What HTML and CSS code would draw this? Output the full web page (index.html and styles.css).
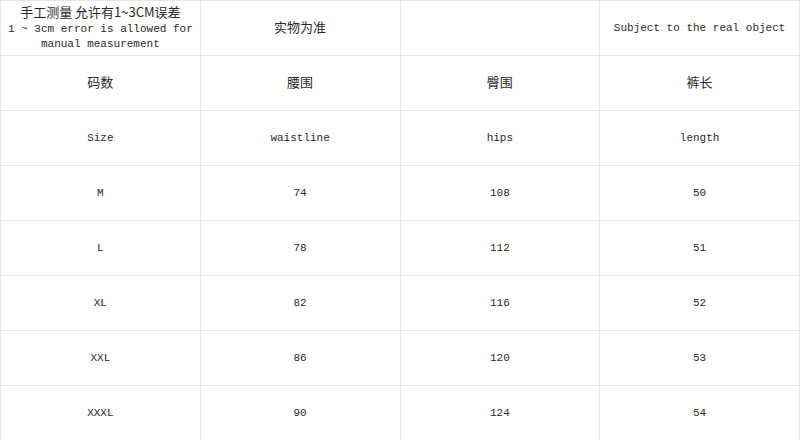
FILE: index.html
```html
<!DOCTYPE html>
<html>
<head>
<meta charset="utf-8">
<link rel="stylesheet" href="styles.css">
</head>
<body>
<table class="size-table">
  <colgroup><col class="c"><col class="c"><col class="c"><col class="c"></colgroup>
  <tr class="head">
    <td><span class="cjk">手工测量 允许有1~3CM误差</span><br>1 ~ 3cm error is allowed for<br>manual measurement</td>
    <td><span class="cjk">实物为准</span></td>
    <td></td>
    <td>Subject to the real object</td>
  </tr>
  <tr><td><span class="cjk">码数</span></td><td><span class="cjk">腰围</span></td><td><span class="cjk">臀围</span></td><td><span class="cjk">裤长</span></td></tr>
  <tr><td>Size</td><td>waistline</td><td>hips</td><td>length</td></tr>
  <tr><td>M</td><td>74</td><td>108</td><td>50</td></tr>
  <tr><td>L</td><td>78</td><td>112</td><td>51</td></tr>
  <tr><td>XL</td><td>82</td><td>116</td><td>52</td></tr>
  <tr><td>XXL</td><td>86</td><td>120</td><td>53</td></tr>
  <tr><td>XXXL</td><td>90</td><td>124</td><td>54</td></tr>
</table>
</body>
</html>
```
FILE: styles.css
```css
html, body {
  margin: 0;
  padding: 0;
  background: #ffffff;
}
.size-table {
  width: 800px;
  height: 440px;
  border-collapse: collapse;
  table-layout: fixed;
  font-family: "Liberation Mono", "DejaVu Sans Mono", monospace;
  font-size: 11px;
  color: #2a2a2a;
}
.size-table .c {
  width: 25%;
}
.size-table td {
  border: 1px solid #e6e6e6;
  height: 54px;
  padding: 0;
  text-align: center;
  vertical-align: middle;
  line-height: 15px;
}
.size-table .head td {
  vertical-align: middle;
}
.cjk {
  font-family: "Noto Sans CJK SC", sans-serif;
  font-size: 13px;
  line-height: 15px;
}
```
